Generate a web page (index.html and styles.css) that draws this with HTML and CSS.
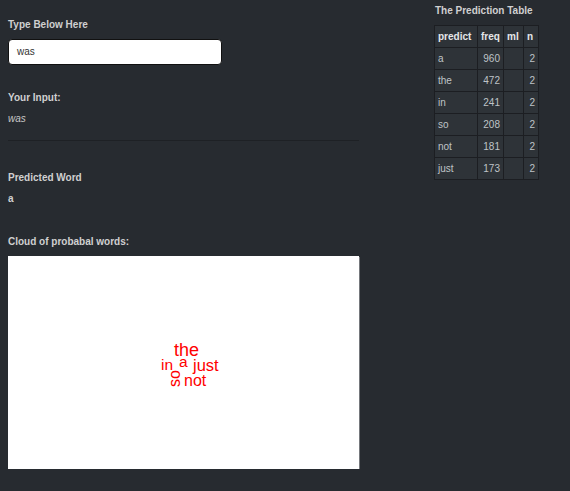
FILE: index.html
```html
<!DOCTYPE html>
<html>
<head>
<meta charset="utf-8">
<link rel="stylesheet" href="styles.css">
</head>
<body>
<div class="page">
  <div class="left">
    <div class="label first">Type Below Here</div>
    <div class="input">was</div>
    <div class="label gap-input">Your Input:</div>
    <div class="echo">was</div>
    <div class="rule"></div>
    <div class="label gap-rule">Predicted Word</div>
    <div class="value">a</div>
    <div class="label gap-value">Cloud of probabal words:</div>
    <div class="cloud">
      <svg width="351" height="213" viewBox="0 0 351 213" xmlns="http://www.w3.org/2000/svg">
        <g fill="#ff0000" font-family="Liberation Sans, Arial, sans-serif">
          <text x="166" y="100" font-size="18">the</text>
          <text x="153" y="114" font-size="15.5">in</text>
          <text x="171" y="111" font-size="15.5">a</text>
          <text x="185" y="115" font-size="16.5">just</text>
          <text x="176" y="130" font-size="16">not</text>
          <text transform="translate(171.5 131) rotate(-90)" font-size="16">so</text>
        </g>
      </svg>
    </div>
  </div>
  <div class="right">
    <div class="label table-title">The Prediction Table</div>
    <table class="pred">
      <thead>
        <tr><th>predict</th><th>freq</th><th>ml</th><th>n</th></tr>
      </thead>
      <tbody>
        <tr><td>a</td><td class="num">960</td><td></td><td class="num">2</td></tr>
        <tr><td>the</td><td class="num">472</td><td></td><td class="num">2</td></tr>
        <tr><td>in</td><td class="num">241</td><td></td><td class="num">2</td></tr>
        <tr><td>so</td><td class="num">208</td><td></td><td class="num">2</td></tr>
        <tr><td>not</td><td class="num">181</td><td></td><td class="num">2</td></tr>
        <tr><td>just</td><td class="num">173</td><td></td><td class="num">2</td></tr>
      </tbody>
    </table>
  </div>
</div>
</body>
</html>
```
FILE: styles.css
```css
html, body {
  margin: 0;
  padding: 0;
  background: #272b30;
}
body {
  font-family: "Liberation Sans", Arial, sans-serif;
  font-size: 10px;
  color: #c8c8c8;
}
.page {
  display: flex;
  align-items: flex-start;
  padding-left: 8px;
}
.left {
  width: 351px;
  display: flex;
  flex-direction: column;
}
.right {
  margin-left: 75px;
  display: flex;
  flex-direction: column;
}
.label {
  font-weight: bold;
  line-height: 13px;
  color: #d0d0d0;
}
.first { margin-top: 18px; }
.input {
  margin-top: 8px;
  background: #fff;
  border: 1px solid #111;
  border-radius: 4px;
  color: #333;
  line-height: 24px;
  padding-left: 8px;
  box-sizing: border-box;
  width: 214px;
  height: 26px;
}
.gap-input { margin-top: 26px; }
.echo {
  margin-top: 8px;
  font-style: italic;
  line-height: 13px;
}
.rule {
  margin-top: 15px;
  height: 1px;
  background: #1e2125;
}
.gap-rule { margin-top: 30px; }
.value {
  margin-top: 8px;
  font-weight: bold;
  line-height: 13px;
  color: #d0d0d0;
}
.gap-value { margin-top: 30px; }
.cloud {
  margin-top: 8px;
  width: 351px;
  height: 213px;
  background: #fff;
  box-shadow: 1px 1px 0 #75787c;
}
.cloud svg { display: block; }
.table-title {
  margin-top: 4px;
  margin-left: 1px;
}
.pred {
  margin-top: 8px;
  border-collapse: collapse;
  background: #2e3338;
  font-size: 10px;
}
.pred th, .pred td {
  border: 1px solid #1c1e22;
  height: 21px;
  padding: 0 3px;
  text-align: left;
  color: #bfc3c7;
  font-weight: normal;
}
.pred th {
  font-weight: bold;
  color: #e4e6e8;
}
.pred th:nth-child(1), .pred td:nth-child(1) { width: 36px; }
.pred th:nth-child(2), .pred td:nth-child(2) { width: 19px; }
.pred th:nth-child(3), .pred td:nth-child(3) { width: 13px; }
.pred th:nth-child(4), .pred td:nth-child(4) { width: 8px; }
.pred td.num { text-align: right; }
```
